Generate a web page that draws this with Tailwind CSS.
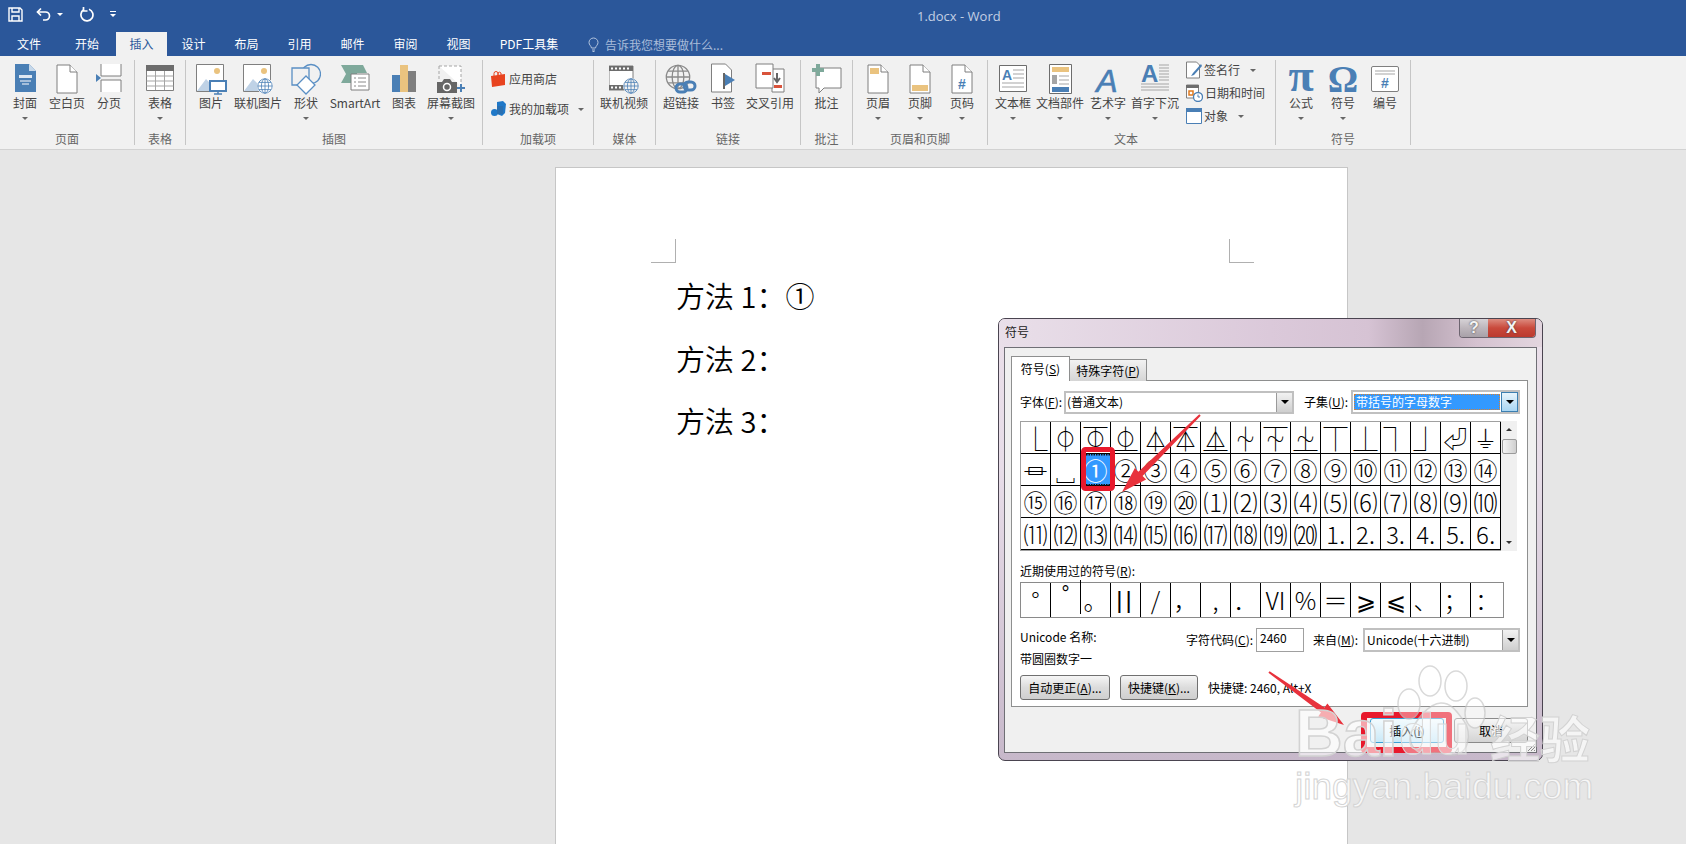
<!DOCTYPE html>
<html lang="zh">
<head>
<meta charset="utf-8">
<title>1.docx - Word</title>
<script src="https://cdn.jsdelivr.net/npm/@tailwindcss/browser@4"></script>
</head>
<body class="relative w-[1686px] h-[844px] overflow-hidden bg-[#e6e6e6] text-[12px] text-[#444] font-['Noto_Sans_CJK_SC','DejaVu_Sans',sans-serif]">

<svg class="hidden">
  <symbol id="globe" viewBox="0 0 20 20"><g fill="none" stroke="currentColor" stroke-width="1"><circle cx="10" cy="10" r="9"/><ellipse cx="10" cy="10" rx="4.500" ry="9"/><path d="M10 1v18M1 10h18M2.500 5.500h15M2.500 14.500h15"/></g></symbol>
  <symbol id="page" viewBox="0 0 22 30"><path d="M1 1h13l7 7v21H1z" fill="#fff" stroke="#7f7f7f"/><path d="M14 1v7h7" fill="#fff" stroke="#7f7f7f"/></symbol>
</svg>

<!-- title bar -->
<div class="relative h-[32px] bg-[#2b579a] flex items-center text-white">
  <svg class="ml-[8px] w-[15px] h-[15px] mb-[4px]" viewBox="0 0 15 15" fill="none" stroke="#fff" stroke-width="1.400"><path d="M1 1h11l2 2v11H1z"/><path d="M4 1v4h7V1M4 14V9h7v5"/></svg>
  <svg class="ml-[13px] w-[16px] h-[14px] mb-[4px]" viewBox="0 0 16 14" fill="none" stroke="#fff" stroke-width="1.700"><path d="M1.500 5h8a4 4 0 0 1 0 8H7"/><path d="M5 1.500 1.500 5 5 8.500"/></svg>
  <div class="ml-[5px] mb-[4px] w-0 h-0 border-x-[3px] border-t-[3px] border-x-transparent border-t-white"></div>
  <svg class="ml-[17px] w-[15px] h-[15px] mb-[4px]" viewBox="0 0 15 15" fill="none" stroke="#fff" stroke-width="1.700"><path d="M9 2.200a6 6 0 1 1-5 .4"/><path d="M3.500 0v4h4"/></svg>
  <div class="ml-[15px] mb-[4px] flex flex-col items-center gap-[2px]"><div class="w-[6px] h-px bg-white"></div><div class="w-0 h-0 border-x-[3px] border-t-[3px] border-x-transparent border-t-white"></div></div>
  <div class="absolute left-[917px] top-[7px] text-[13px] leading-[18px] text-[#c3d0e4] font-['Open_Sans',sans-serif]">1.docx - Word</div>
</div>

<!-- tabs -->
<div class="h-[24px] bg-[#2b579a] flex text-white text-[12px] leading-[23px] text-center">
  <div class="w-[58px]">文件</div>
  <div class="w-[58px]">开始</div>
  <div class="w-[51px] bg-[#f1f1f1] text-[#2b579a]">插入</div>
  <div class="w-[53px]">设计</div>
  <div class="w-[53px]">布局</div>
  <div class="w-[53px]">引用</div>
  <div class="w-[53px]">邮件</div>
  <div class="w-[53px]">审阅</div>
  <div class="w-[53px]">视图</div>
  <div class="w-[88px]">PDF工具集</div>
  <div class="ml-[15px] flex items-center gap-[6px] text-[#a9bcd9]">
    <svg class="w-[11px] h-[15px]" viewBox="0 0 11 15" fill="none" stroke="#b4c5de"><path d="M3.500 11C3 8.500 1 8 1 5.500a4.500 4.500 0 0 1 9 0C10 8 8 8.500 7.500 11zM4 13h3M4.500 14.500h2"/></svg>
    <span>告诉我您想要做什么...</span>
  </div>
</div>

<!-- ribbon -->
<div class="h-[94px] bg-[#f1f1f1] border-b border-[#d2d2d2] flex py-[4px]">

  <!-- 页面 -->
  <div class="w-[135px] shrink-0 border-r border-[#c6c6c6] flex flex-col pt-[3px] pl-[4px]">
    <div class="flex flex-1">
      <div class="w-[42px] flex flex-col items-center">
        <svg class="w-[21px] h-[32px]" viewBox="0 0 21 32"><path d="M0 1h14l7 7v21H0z" fill="#4a7fb5"/><path d="M14 1v7h7z" fill="#c6d8ea"/><path d="M4 12h13v3H4z" fill="#dfe8f2"/><path d="M5 18h11M7 21h7" stroke="#fff"/></svg>
        <div class="h-[16px] leading-[16px] whitespace-nowrap">封面</div>
        <div class="mt-[6px] w-0 h-0 border-x-[3px] border-t-[3px] border-x-transparent border-t-[#666]"></div>
      </div>
      <div class="w-[42px] flex flex-col items-center">
        <svg class="w-[22px] h-[32px]"><use href="#page"/></svg>
        <div class="h-[16px] leading-[16px] whitespace-nowrap">空白页</div>
      </div>
      <div class="w-[42px] flex flex-col items-center">
        <svg class="w-[26px] h-[32px]" viewBox="0 0 26 32"><path d="M5 1v12h20V1M5 29V17h20v12" fill="#fff" stroke="#7f7f7f"/><path d="M0 11l5 4-5 4z" fill="#4a7fb5"/></svg>
        <div class="h-[16px] leading-[16px] whitespace-nowrap">分页</div>
      </div>
    </div>
    <div class="h-[16px] leading-[16px] text-center text-[#666] -mb-[2px] -ml-[4px]">页面</div>
  </div>

  <!-- 表格 -->
  <div class="w-[51px] shrink-0 border-r border-[#c6c6c6] flex flex-col pt-[3px]">
    <div class="flex flex-1">
      <div class="w-[50px] flex flex-col items-center">
        <svg class="w-[28px] h-[32px]" viewBox="0 0 28 32"><path d="M.5 2.500h27v25H.5z" fill="#fff" stroke="#7f7f7f"/><path d="M0 2h28v6H0z" fill="#6d6d6d"/><path d="M.5 13h27M.5 18h27M.5 23h27M9.500 8v19M18.500 8v19" stroke="#a5a5a5"/></svg>
        <div class="h-[16px] leading-[16px] whitespace-nowrap">表格</div>
        <div class="mt-[6px] w-0 h-0 border-x-[3px] border-t-[3px] border-x-transparent border-t-[#666]"></div>
      </div>
    </div>
    <div class="h-[16px] leading-[16px] text-center text-[#666] -mb-[2px]">表格</div>
  </div>

  <!-- 插图 -->
  <div class="w-[297px] shrink-0 border-r border-[#c6c6c6] flex flex-col pt-[3px] pl-[3px]">
    <div class="flex flex-1">
      <div class="w-[44px] flex flex-col items-center">
        <svg class="w-[31px] h-[32px]" viewBox="0 0 31 32"><path d="M.5 1.500h27v27H.5z" fill="#fff" stroke="#7f7f7f"/><circle cx="21" cy="8" r="3" fill="#eac37f"/><path d="M1 28l9-12 5 5 4-3 6 10z" fill="#bfd2e6"/><path d="M14 18h16v10H14z" fill="#fff" stroke="#4a7fb5" stroke-width="2"/><path d="M22 28v3M18 31h8" stroke="#4a7fb5" stroke-width="1.500"/></svg>
        <div class="h-[16px] leading-[16px] whitespace-nowrap">图片</div>
      </div>
      <div class="w-[50px] flex flex-col items-center">
        <svg class="w-[31px] h-[32px]" viewBox="0 0 31 32"><path d="M.5 1.500h27v27H.5z" fill="#fff" stroke="#7f7f7f"/><circle cx="21" cy="8" r="3" fill="#eac37f"/><path d="M1 28l9-12 5 5 4-3 6 10z" fill="#bfd2e6"/><circle cx="22" cy="23" r="8" fill="#fff"/><use href="#globe" x="14" y="15" width="16" height="16" class="text-[#4a7fb5]"/></svg>
        <div class="h-[16px] leading-[16px] whitespace-nowrap">联机图片</div>
      </div>
      <div class="w-[46px] flex flex-col items-center">
        <svg class="w-[30px] h-[32px]" viewBox="0 0 30 32" fill="none" stroke="#5a8fc4" stroke-width="1.300"><circle cx="20" cy="11" r="9.500"/><path d="M1 5h17v17H1z" fill="#f1f1f1"/><path d="M15 13l9 9-9 9-9-9z" fill="#fff"/></svg>
        <div class="h-[16px] leading-[16px] whitespace-nowrap">形状</div>
        <div class="mt-[6px] w-0 h-0 border-x-[3px] border-t-[3px] border-x-transparent border-t-[#666]"></div>
      </div>
      <div class="w-[52px] flex flex-col items-center">
        <svg class="w-[30px] h-[32px]" viewBox="0 0 30 32"><path d="M1 2h22l4 8-10 0v10H1l5-9z" fill="#7fa99b"/><path d="M11 11h18v16H11z" fill="#fff" stroke="#7f7f7f"/><path d="M14 15h2M18 15h8M14 19h2M18 19h8M14 23h2M18 23h8" stroke="#8a8a8a"/></svg>
        <div class="h-[16px] leading-[16px] whitespace-nowrap">SmartArt</div>
      </div>
      <div class="w-[46px] flex flex-col items-center">
        <svg class="w-[24px] h-[32px]" viewBox="0 0 24 32"><path d="M0 12h8v17H0z" fill="#4a7fb5"/><path d="M8 2h8v27H8z" fill="#eac37f"/><path d="M16 8h8v21h-8z" fill="#7f7f7f"/></svg>
        <div class="h-[16px] leading-[16px] whitespace-nowrap">图表</div>
      </div>
      <div class="w-[48px] flex flex-col items-center">
        <svg class="w-[28px] h-[32px]" viewBox="0 0 28 32"><path d="M2 3h22v20" fill="#fff" stroke="#a5a5a5" stroke-dasharray="3 2"/><path d="M2 3v14" stroke="#a5a5a5" stroke-dasharray="3 2"/><path d="M0 19h5l2-3h6l2 3h5v11H0z" fill="#666"/><circle cx="10" cy="24" r="3.500" fill="#666" stroke="#fff" stroke-width="1.500"/><path d="M24 21v8M20 25h8" stroke="#4a7fb5" stroke-width="2"/></svg>
        <div class="h-[16px] leading-[16px] whitespace-nowrap">屏幕截图</div>
        <div class="mt-[6px] w-0 h-0 border-x-[3px] border-t-[3px] border-x-transparent border-t-[#666]"></div>
      </div>
    </div>
    <div class="h-[16px] leading-[16px] text-center text-[#666] -mb-[2px] -ml-[3px]">插图</div>
  </div>

  <!-- 加载项 -->
  <div class="w-[111px] shrink-0 border-r border-[#c6c6c6] flex flex-col pt-[11px] pl-[8px]">
    <div class="flex flex-col flex-1 gap-[14px]">
      <div class="h-[16px] flex items-center">
        <svg class="w-[15px] h-[16px]" viewBox="0 0 15 16"><path d="M0 5l14-2v11L1 16z" fill="#e8431f"/><path d="M3 5V2.500a2 2 0 0 1 4 0V5M7 4V2a2 2 0 0 1 3 0v2" fill="none" stroke="#e8431f"/></svg>
        <span class="ml-[3px] leading-[16px]">应用商店</span>
      </div>
      <div class="h-[16px] flex items-center">
        <svg class="w-[15px] h-[16px]" viewBox="0 0 15 16" fill="#1f78c8"><path d="M6 1l6-1 3 3-1 9-3 3-5-2z"/><circle cx="3.500" cy="11.500" r="3.500"/><path d="M6 5h6v8H6z" fill="#2a6fb0"/></svg>
        <span class="ml-[3px] leading-[16px]">我的加载项</span>
        <div class="ml-[9px] w-0 h-0 border-x-[3px] border-t-[3px] border-x-transparent border-t-[#666]"></div>
      </div>
    </div>
    <div class="h-[16px] leading-[16px] text-center text-[#666] -mb-[2px] -ml-[8px]">加载项</div>
  </div>

  <!-- 媒体 -->
  <div class="w-[62px] shrink-0 border-r border-[#c6c6c6] flex flex-col pt-[3px]">
    <div class="flex flex-1">
      <div class="w-[60px] flex flex-col items-center">
        <svg class="w-[30px] h-[32px]" viewBox="0 0 30 32"><path d="M0 3h24v24H0z" fill="#fff" stroke="#7f7f7f"/><path d="M0 3h24v5H0zM0 22h24v5H0z" fill="#6d6d6d"/><path d="M2 5.500h20M2 24.500h20" stroke="#fff" stroke-width="2" stroke-dasharray="2 2"/><circle cx="22" cy="23" r="8" fill="#f1f1f1"/><use href="#globe" x="14" y="15" width="16" height="16" class="text-[#4a7fb5]"/></svg>
        <div class="h-[16px] leading-[16px] whitespace-nowrap">联机视频</div>
      </div>
    </div>
    <div class="h-[16px] leading-[16px] text-center text-[#666] -mb-[2px]">媒体</div>
  </div>

  <!-- 链接 -->
  <div class="w-[145px] shrink-0 border-r border-[#c6c6c6] flex flex-col pt-[3px] pl-[2px]">
    <div class="flex flex-1">
      <div class="w-[46px] flex flex-col items-center">
        <svg class="w-[32px] h-[32px]" viewBox="0 0 32 32"><use href="#globe" x="0" y="1" width="26" height="26" class="text-[#8a8a8a]"/><g fill="none" stroke="#4a7fb5" stroke-width="3"><rect x="11" y="21" width="11" height="8" rx="4"/><rect x="19" y="19" width="11" height="8" rx="4"/></g></svg>
        <div class="h-[16px] leading-[16px] whitespace-nowrap">超链接</div>
      </div>
      <div class="w-[38px] flex flex-col items-center">
        <svg class="w-[24px] h-[32px]" viewBox="0 0 24 32"><path d="M.5 1h14l6 6v22H.5z" fill="#fff" stroke="#7f7f7f"/><path d="M12 10h2v16h-2z" fill="#666"/><path d="M14 11l10 6-10 6z" fill="#4a7fb5"/></svg>
        <div class="h-[16px] leading-[16px] whitespace-nowrap">书签</div>
      </div>
      <div class="w-[56px] flex flex-col items-center">
        <svg class="w-[30px] h-[32px]" viewBox="0 0 30 32"><path d="M17 6h12v23H17z" fill="#fff" stroke="#7f7f7f"/><path d="M1 1h17v24H1z" fill="#fff" stroke="#7f7f7f"/><path d="M7 9h9v3H7zM19 22h8v3h-8z" fill="#d9533b"/><path d="M22 10v8M19 15l3 4 3-4" fill="none" stroke="#666" stroke-width="2"/></svg>
        <div class="h-[16px] leading-[16px] whitespace-nowrap">交叉引用</div>
      </div>
    </div>
    <div class="h-[16px] leading-[16px] text-center text-[#666] -mb-[2px] -ml-[2px]">链接</div>
  </div>

  <!-- 批注 -->
  <div class="w-[52px] shrink-0 border-r border-[#c6c6c6] flex flex-col pt-[3px]">
    <div class="flex flex-1">
      <div class="w-[51px] flex flex-col items-center">
        <svg class="w-[30px] h-[32px]" viewBox="0 0 30 32"><path d="M4 5h25v20H12l-5 5v-5H4z" fill="#fff" stroke="#7f7f7f" stroke-linejoin="round"/><path d="M5 1h4v4h4v4H9v4H5V9H1V5h4z" fill="#7fa99b" transform="translate(-1 0)"/></svg>
        <div class="h-[16px] leading-[16px] whitespace-nowrap">批注</div>
      </div>
    </div>
    <div class="h-[16px] leading-[16px] text-center text-[#666] -mb-[2px]">批注</div>
  </div>

  <!-- 页眉和页脚 -->
  <div class="w-[135px] shrink-0 border-r border-[#c6c6c6] flex flex-col pt-[3px] pl-[4px]">
    <div class="flex flex-1">
      <div class="w-[42px] flex flex-col items-center">
        <svg class="w-[22px] h-[32px]" viewBox="0 0 22 30"><use href="#page"/><path d="M3 4h9v6H3z" fill="#eac37f"/></svg>
        <div class="h-[16px] leading-[16px] whitespace-nowrap">页眉</div>
        <div class="mt-[6px] w-0 h-0 border-x-[3px] border-t-[3px] border-x-transparent border-t-[#666]"></div>
      </div>
      <div class="w-[42px] flex flex-col items-center">
        <svg class="w-[22px] h-[32px]" viewBox="0 0 22 30"><use href="#page"/><path d="M3 21h16v6H3z" fill="#eac37f"/></svg>
        <div class="h-[16px] leading-[16px] whitespace-nowrap">页脚</div>
        <div class="mt-[6px] w-0 h-0 border-x-[3px] border-t-[3px] border-x-transparent border-t-[#666]"></div>
      </div>
      <div class="w-[42px] flex flex-col items-center">
        <svg class="w-[22px] h-[32px]" viewBox="0 0 22 30"><use href="#page"/><text x="11" y="25" text-anchor="middle" font-size="14" font-weight="700" fill="#4a7fb5" font-family="Liberation Sans">#</text></svg>
        <div class="h-[16px] leading-[16px] whitespace-nowrap">页码</div>
        <div class="mt-[6px] w-0 h-0 border-x-[3px] border-t-[3px] border-x-transparent border-t-[#666]"></div>
      </div>
    </div>
    <div class="h-[16px] leading-[16px] text-center text-[#666] -mb-[2px] -ml-[4px]">页眉和页脚</div>
  </div>

  <!-- 文本 -->
  <div class="w-[288px] shrink-0 border-r border-[#c6c6c6] flex flex-col pt-[3px] pl-[4px]">
    <div class="flex flex-1">
      <div class="w-[42px] flex flex-col items-center">
        <svg class="w-[28px] h-[32px]" viewBox="0 0 28 32"><path d="M.5 2.500h27v26H.5z" fill="#fff" stroke="#6d6d6d"/><text x="3" y="17" font-size="14" font-weight="700" fill="#4a7fb5" font-family="Liberation Sans">A</text><path d="M14 7h11M14 11h11M14 15h11M3 20h22M3 24h22" stroke="#a5a5a5"/></svg>
        <div class="h-[16px] leading-[16px] whitespace-nowrap">文本框</div>
        <div class="mt-[6px] w-0 h-0 border-x-[3px] border-t-[3px] border-x-transparent border-t-[#666]"></div>
      </div>
      <div class="w-[52px] flex flex-col items-center">
        <svg class="w-[23px] h-[32px]" viewBox="0 0 23 32"><path d="M.5 1.500h22v29H.5z" fill="#fff" stroke="#6d6d6d"/><path d="M3 4h17v5H3z" fill="#eac37f"/><path d="M3 12h5v9H3z" fill="#a5a5a5"/><path d="M10 13h10M10 17h10M10 21h10" stroke="#a5a5a5"/><path d="M3 24h17v5H3z" fill="#4a7fb5"/></svg>
        <div class="h-[16px] leading-[16px] whitespace-nowrap">文档部件</div>
        <div class="mt-[6px] w-0 h-0 border-x-[3px] border-t-[3px] border-x-transparent border-t-[#666]"></div>
      </div>
      <div class="w-[44px] flex flex-col items-center">
        <svg class="w-[26px] h-[32px] overflow-visible" viewBox="0 0 26 32"><text x="12" y="29" text-anchor="middle" font-size="32" font-style="italic" fill="#4a7fb5" stroke="#4a7fb5" stroke-width=".6" font-family="Liberation Sans">A</text></svg>
        <div class="h-[16px] leading-[16px] whitespace-nowrap">艺术字</div>
        <div class="mt-[6px] w-0 h-0 border-x-[3px] border-t-[3px] border-x-transparent border-t-[#666]"></div>
      </div>
      <div class="w-[50px] flex flex-col items-center">
        <svg class="w-[28px] h-[32px]" viewBox="0 0 28 32"><text x="0" y="19" font-size="24" font-weight="700" fill="#4a7fb5" font-family="Liberation Sans">A</text><path d="M18 2h10M18 5h10M18 8h10M18 11h10M18 14h10M18 17h10M0 21h28M0 24h28M0 27h28" stroke="#a5a5a5"/></svg>
        <div class="h-[16px] leading-[16px] whitespace-nowrap">首字下沉</div>
        <div class="mt-[6px] w-0 h-0 border-x-[3px] border-t-[3px] border-x-transparent border-t-[#666]"></div>
      </div>
      <div class="ml-[6px] flex flex-col gap-[7px] -mt-[1px]">
        <div class="h-[16px] flex items-center">
          <svg class="w-[16px] h-[18px]" viewBox="0 0 16 18"><path d="M.5 1h10l3 3v13H.5z" fill="#fff" stroke="#7f7f7f"/><path d="M15 3L7 12l-2 3 3-1 8-9z" fill="#4a7fb5"/></svg>
          <span class="ml-[2px] leading-[16px]">签名行</span>
          <div class="ml-[10px] w-0 h-0 border-x-[3px] border-t-[3px] border-x-transparent border-t-[#666]"></div>
        </div>
        <div class="h-[16px] flex items-center">
          <svg class="w-[17px] h-[18px]" viewBox="0 0 17 18"><path d="M.5 1h12v13H.5z" fill="#fff" stroke="#7f7f7f"/><path d="M0 1h13v3H0z" fill="#6d6d6d"/><path d="M3 7h4v4H3z" fill="#fff" stroke="#e07a1f" stroke-width="1.500"/><circle cx="12" cy="13" r="4.500" fill="#fff" stroke="#4a7fb5" stroke-width="1.300"/><path d="M12 10.500V13h2" fill="none" stroke="#4a7fb5"/></svg>
          <span class="ml-[2px] leading-[16px]">日期和时间</span>
        </div>
        <div class="h-[16px] flex items-center">
          <svg class="w-[16px] h-[16px]" viewBox="0 0 16 16"><path d="M.5.500h15v15H.5z" fill="#fff" stroke="#4a7fb5"/><path d="M0 0h16v4H0z" fill="#4a7fb5"/></svg>
          <span class="ml-[2px] leading-[16px]">对象</span>
          <div class="ml-[10px] w-0 h-0 border-x-[3px] border-t-[3px] border-x-transparent border-t-[#666]"></div>
        </div>
      </div>
    </div>
    <div class="h-[16px] leading-[16px] text-[#666] -mb-[2px] pl-[122px]">文本</div>
  </div>

  <!-- 符号 -->
  <div class="w-[135px] shrink-0 border-r border-[#c6c6c6] flex flex-col pt-[3px] pl-[4px]">
    <div class="flex flex-1">
      <div class="w-[42px] flex flex-col items-center">
        <svg class="w-[30px] h-[32px] overflow-visible" viewBox="0 0 30 32"><text x="15" y="28" text-anchor="middle" font-size="46" font-weight="700" fill="#4a7fb5" font-family="Liberation Serif">π</text></svg>
        <div class="h-[16px] leading-[16px] whitespace-nowrap">公式</div>
        <div class="mt-[6px] w-0 h-0 border-x-[3px] border-t-[3px] border-x-transparent border-t-[#666]"></div>
      </div>
      <div class="w-[42px] flex flex-col items-center">
        <svg class="w-[30px] h-[32px] overflow-visible" viewBox="0 0 30 32"><text x="15" y="29" text-anchor="middle" font-size="38" font-weight="700" fill="#4a7fb5" font-family="Liberation Serif">Ω</text></svg>
        <div class="h-[16px] leading-[16px] whitespace-nowrap">符号</div>
        <div class="mt-[6px] w-0 h-0 border-x-[3px] border-t-[3px] border-x-transparent border-t-[#666]"></div>
      </div>
      <div class="w-[42px] flex flex-col items-center">
        <svg class="w-[28px] h-[32px]" viewBox="0 0 28 32"><rect x=".5" y="3.500" width="27" height="25" rx="1.500" fill="#fff" stroke="#7f7f7f"/><path d="M4 8h20M4 11h20" stroke="#a5a5a5"/><text x="14" y="25" text-anchor="middle" font-size="14" font-weight="700" fill="#4a7fb5" font-family="Liberation Sans">#</text></svg>
        <div class="h-[16px] leading-[16px] whitespace-nowrap">编号</div>
      </div>
    </div>
    <div class="h-[16px] leading-[16px] text-center text-[#666] -mb-[2px] -ml-[4px]">符号</div>
  </div>
</div>

<!-- document page -->
<div class="absolute left-[555px] top-[167px] w-[793px] h-[690px] bg-white border border-[#c6c6c6]">
  <div class="absolute left-[95px] top-[71px] w-[25px] h-[24px] border-r border-b border-[#b0b0b0]"></div>
  <div class="absolute left-[673px] top-[71px] w-[25px] h-[24px] border-l border-b border-[#b0b0b0]"></div>
  <div class="pl-[120px] pt-[96px] text-[29px] leading-[62.5px] text-black font-[350]">
    <p>方法 1：①</p>
    <p>方法 2：</p>
    <p>方法 3：</p>
  </div>
</div>

<!-- symbol dialog -->
<div class="absolute left-[998px] top-[318px] w-[545px] h-[443px] rounded-[7px] border border-[#4a4450] bg-[linear-gradient(to_bottom,#eadfe9,#e7dde8_35%,#c7b8ca)] px-[5px] text-black">
  <div class="-mx-[5px] h-[28px] rounded-t-[6px] bg-[linear-gradient(to_right,#e9dfe9,#dbc9da_50%,#d6c3d4_68%,#b7a6b4_78%,#d5c2d0_88%,#e3d6df)] flex items-start relative">
    <span class="ml-[6px] mt-[4px] leading-[18px] text-[#222]">符号</span>
    <div class="absolute right-[6px] top-0 flex h-[19px] rounded-b-[4px] overflow-hidden border border-t-0 border-[#6d6570]">
      <div class="w-[28px] bg-[linear-gradient(to_bottom,#d6d2d6,#bdb6bc_50%,#a8a1a8)] text-center text-[#f4f4f4] font-bold text-[16px] leading-[18px] [font-family:'Liberation_Sans'] [text-shadow:0_0_2px_#333]">?</div>
      <div class="w-[47px] bg-[linear-gradient(to_bottom,#dd8b7f,#c9493b_50%,#bb3a2f)] text-center text-[#f4f4f4] font-bold text-[16px] leading-[18px] [font-family:'Liberation_Sans'] [text-shadow:0_0_2px_#333]">X</div>
    </div>
  </div>
  <div class="h-[406px] bg-[#f0f0f0] border border-[#6f6f75] pl-[6px] pr-[8px] relative">

    <!-- tabs -->
    <div class="flex items-end h-[33px] -mb-px relative">
      <div class="w-[59px] h-[25px] bg-white border border-b-0 border-[#8e8f8f] text-center leading-[24px] z-10">符号(<span class="underline">S</span>)</div>
      <div class="w-[77px] h-[22px] bg-[linear-gradient(to_bottom,#f2f2f2,#d5d5d5)] border border-l-0 border-b-0 border-[#8e8f8f] text-center leading-[22px]">特殊字符(<span class="underline">P</span>)</div>
    </div>

    <!-- panel -->
    <div class="h-[327px] bg-white border border-[#8e8f8f] pl-[8px]">
      <div class="mt-[9px] h-[24px] flex items-center">
        <span class="w-[44px] leading-[16px]">字体(<span class="underline">F</span>):</span>
        <div class="w-[230px] h-[23px] border-2 border-[#c0c0c0] flex items-center justify-between">
          <span class="pl-[1px] leading-[16px]">(普通文本)</span>
          <div class="w-[16px] h-full bg-[linear-gradient(to_bottom,#f2f2f2,#cfcfcf)] border-l border-[#9a9a9a] flex items-center justify-center"><div class="w-0 h-0 border-x-[4px] border-t-[4px] border-x-transparent border-t-black"></div></div>
        </div>
        <span class="ml-[10px] w-[47px] leading-[16px]">子集(<span class="underline">U</span>):</span>
        <div class="w-[169px] h-[24px] border-2 border-[#c0c0c0] flex items-center justify-between pl-[1px]">
          <span class="flex-1 h-[16px] bg-[#3399ff] text-white leading-[16px] outline outline-dotted outline-[#d98030] -outline-offset-1 pl-[2px]">带括号的字母数字</span>
          <div class="ml-[1px] w-[17px] h-full bg-[linear-gradient(to_bottom,#e8f4fb,#a9d6f3)] border border-[#3c7fb1] flex items-center justify-center"><div class="w-0 h-0 border-x-[4px] border-t-[4px] border-x-transparent border-t-black"></div></div>
        </div>
      </div>

      <!-- symbol grid -->
      <div class="mt-[7px] flex">
        <div class="w-[481px] h-[130px] border border-[#a0a0a0] border-r-0 grid grid-cols-[repeat(16,30px)] grid-rows-[repeat(4,32px)] text-[24px] font-light text-black [&>*]:flex [&>*]:items-center [&>*]:justify-center [&>*]:border-r [&>*]:border-b [&>*]:border-black [&>*]:leading-[30px]">
          <div>⎿</div><div>⏀</div><div>⏁</div><div>⏂</div><div>⏃</div><div>⏄</div><div>⏅</div><div>⏆</div><div>⏇</div><div>⏈</div><div>⏉</div><div>⏊</div><div>⏋</div><div>⏌</div><div>⏎</div><div>⏚</div>
          <div>⏛</div><div>␣</div><div class="bg-[#3399ff] text-white font-normal">①</div><div>②</div><div>③</div><div>④</div><div>⑤</div><div>⑥</div><div>⑦</div><div>⑧</div><div>⑨</div><div>⑩</div><div>⑪</div><div>⑫</div><div>⑬</div><div>⑭</div>
          <div>⑮</div><div>⑯</div><div>⑰</div><div>⑱</div><div>⑲</div><div>⑳</div><div>⑴</div><div>⑵</div><div>⑶</div><div>⑷</div><div>⑸</div><div>⑹</div><div>⑺</div><div>⑻</div><div>⑼</div><div>⑽</div>
          <div>⑾</div><div>⑿</div><div>⒀</div><div>⒁</div><div>⒂</div><div>⒃</div><div>⒄</div><div>⒅</div><div>⒆</div><div>⒇</div><div>⒈</div><div>⒉</div><div>⒊</div><div>⒋</div><div>⒌</div><div>⒍</div>
        </div>
        <div class="w-[16px] h-[130px] bg-[#f0f0f0] flex flex-col items-center pt-[7px]">
          <div class="w-0 h-0 border-x-[3px] border-b-[3px] border-x-transparent border-b-[#333]"></div>
          <div class="mt-[8px] w-[15px] h-[15px] rounded-[2px] bg-[linear-gradient(to_right,#f4f4f4,#cfcfcf)] border border-[#9a9a9a]"></div>
          <div class="mt-auto mb-[7px] w-0 h-0 border-x-[3px] border-t-[3px] border-x-transparent border-t-[#333]"></div>
        </div>
      </div>

      <div class="mt-[12px] h-[16px] leading-[16px]">近期使用过的符号(<span class="underline">R</span>):</div>

      <!-- recently used -->
      <div class="mt-[3px] w-[484px] h-[36px] border border-[#8a8a8a] grid grid-cols-[repeat(15,30px)_1fr] text-[24px] font-light text-black [&>*]:flex [&>*]:items-center [&>*]:justify-center [&>*]:border-r [&>*]:border-black [&>*]:leading-[30px] [&>*:last-child]:border-r-0">
        <div>°</div><div class="-translate-y-[3px]">˚</div><div>。</div><div class="tracking-[3px] [font-family:'Liberation_Sans']">||</div><div>/</div><div>，</div><div>,</div><div>．</div><div>Ⅵ</div><div>%</div><div>＝</div><div>⩾</div><div>⩽</div><div>、</div><div>；</div><div>：</div>
      </div>

      <!-- unicode info -->
      <div class="mt-[10px] h-[47px] flex">
        <div class="w-[166px]">
          <div class="h-[18px] leading-[18px]">Unicode 名称:</div>
          <div class="mt-[4px] h-[18px] leading-[18px]">带圆圈数字一</div>
        </div>
        <div class="h-[24px] flex items-center">
          <span class="w-[70px] leading-[16px]">字符代码(<span class="underline">C</span>):</span>
          <div class="w-[48px] h-[24px] border border-[#a0a0a0] pl-[3px] leading-[18px]">2460</div>
          <span class="ml-[9px] w-[50px] leading-[16px]">来自(<span class="underline">M</span>):</span>
          <div class="w-[157px] h-[24px] border-2 border-[#c0c0c0] flex items-center justify-between pl-[2px]">
            <span class="leading-[16px]">Unicode(十六进制)</span>
            <div class="w-[16px] h-full bg-[linear-gradient(to_bottom,#f2f2f2,#cfcfcf)] border-l border-[#9a9a9a] flex items-center justify-center"><div class="w-0 h-0 border-x-[4px] border-t-[4px] border-x-transparent border-t-black"></div></div>
          </div>
        </div>
      </div>

      <div class="h-[25px] flex items-center">
        <div class="w-[90px] h-[25px] rounded-[3px] border border-[#707070] bg-[linear-gradient(to_bottom,#f6f6f6,#dcdcdc_50%,#cfcfcf)] text-center leading-[23px]">自动更正(<span class="underline">A</span>)...</div>
        <div class="ml-[10px] w-[78px] h-[25px] rounded-[3px] border border-[#707070] bg-[linear-gradient(to_bottom,#f6f6f6,#dcdcdc_50%,#cfcfcf)] text-center leading-[23px]">快捷键(<span class="underline">K</span>)...</div>
        <span class="ml-[10px] leading-[16px]">快捷键: 2460, Alt+X</span>
      </div>
    </div>

    <!-- footer buttons -->
    <div class="mt-[11px] flex justify-end gap-[10px]">
      <div class="w-[74px] h-[25px] rounded-[3px] border border-[#3c9fd4] bg-[linear-gradient(to_bottom,#f3fbfe,#dff2fb_50%,#c9e9f8)] text-center leading-[23px]">插入(<span class="underline">I</span>)</div>
      <div class="w-[74px] h-[25px] rounded-[3px] border border-[#8a8a8a] bg-[linear-gradient(to_bottom,#f6f6f6,#e4e4e4_50%,#d4d4d4)] text-center leading-[23px]">取消</div>
    </div>
    <svg class="absolute right-0 bottom-0 w-[9px] h-[9px]" viewBox="0 0 9 9" stroke="#8a8a8a"><path d="M8 1 1 8M8 4 4 8M8 7 7 8"/></svg>
  </div>
</div>

<!-- red annotations -->
<svg class="absolute left-0 top-0 w-[1686px] h-[844px] pointer-events-none" viewBox="0 0 1686 844">
  <path d="M1086 454.500h24M1086 485h24" stroke="#111" stroke-width="2" stroke-dasharray="1.500 1"/>
  <rect x="1083.500" y="449.500" width="29" height="39" rx="2" fill="none" stroke="#e8192c" stroke-width="5"/>
  <rect x="1364" y="715" width="85" height="35" rx="1" fill="none" stroke="#e8192c" stroke-width="6"/>
  <polygon points="1200.700,415.700 1142.600,475.900 1146.100,479.500 1122,492 1134.900,468.100 1138.400,471.700 1199.300,414.300" fill="#e8323c"/>
  <polygon points="1268.400,672.800 1321,712.500 1318.200,716.500 1344,725 1327.400,703.500 1324.500,707.500 1269.600,671.200" fill="#e8323c"/>
</svg>

<!-- baidu watermark -->
<div class="absolute left-[1295px] top-[665px] w-[300px] h-[145px] pointer-events-none">
  <svg class="absolute left-[102px] top-0 w-[90px] h-[95px] opacity-70" viewBox="0 0 90 95" fill="#fff" fill-opacity=".55" stroke="#c9c9c9" stroke-width="1.500">
    <ellipse cx="33" cy="16" rx="11" ry="15"/><ellipse cx="59" cy="21" rx="11" ry="15"/><ellipse cx="12" cy="39" rx="11" ry="15"/><ellipse cx="78" cy="48" rx="10" ry="15"/><path d="M44 38c11 0 16 9 23 18 8 10 6 36-14 34-7-1-12-3-18-2-15 3-24-7-21-20 3-11 18-30 30-30z"/>
  </svg>
  <div class="absolute left-0 top-[30px] text-[66px] leading-[76px] font-bold text-white/60 [-webkit-text-stroke:1.5px_#d2d2d2] [font-family:'Liberation_Sans']">Bai</div>
  <div class="absolute left-[104px] top-[36px] text-[58px] leading-[66px] font-bold text-white/40 [-webkit-text-stroke:1px_#d9d9d9] [font-family:'Liberation_Sans']">du</div>
  <div class="absolute left-[195px] top-[43px] text-[50px] leading-[56px] font-bold text-white/60 [-webkit-text-stroke:1px_#d2d2d2]">经验</div>
  <div class="absolute left-0 top-[99px] text-[37px] leading-[46px] text-white/70 [-webkit-text-stroke:1px_#d4d4d4] [font-family:'Liberation_Sans'] whitespace-nowrap">jingyan.baidu.com</div>
</div>

</body>
</html>
